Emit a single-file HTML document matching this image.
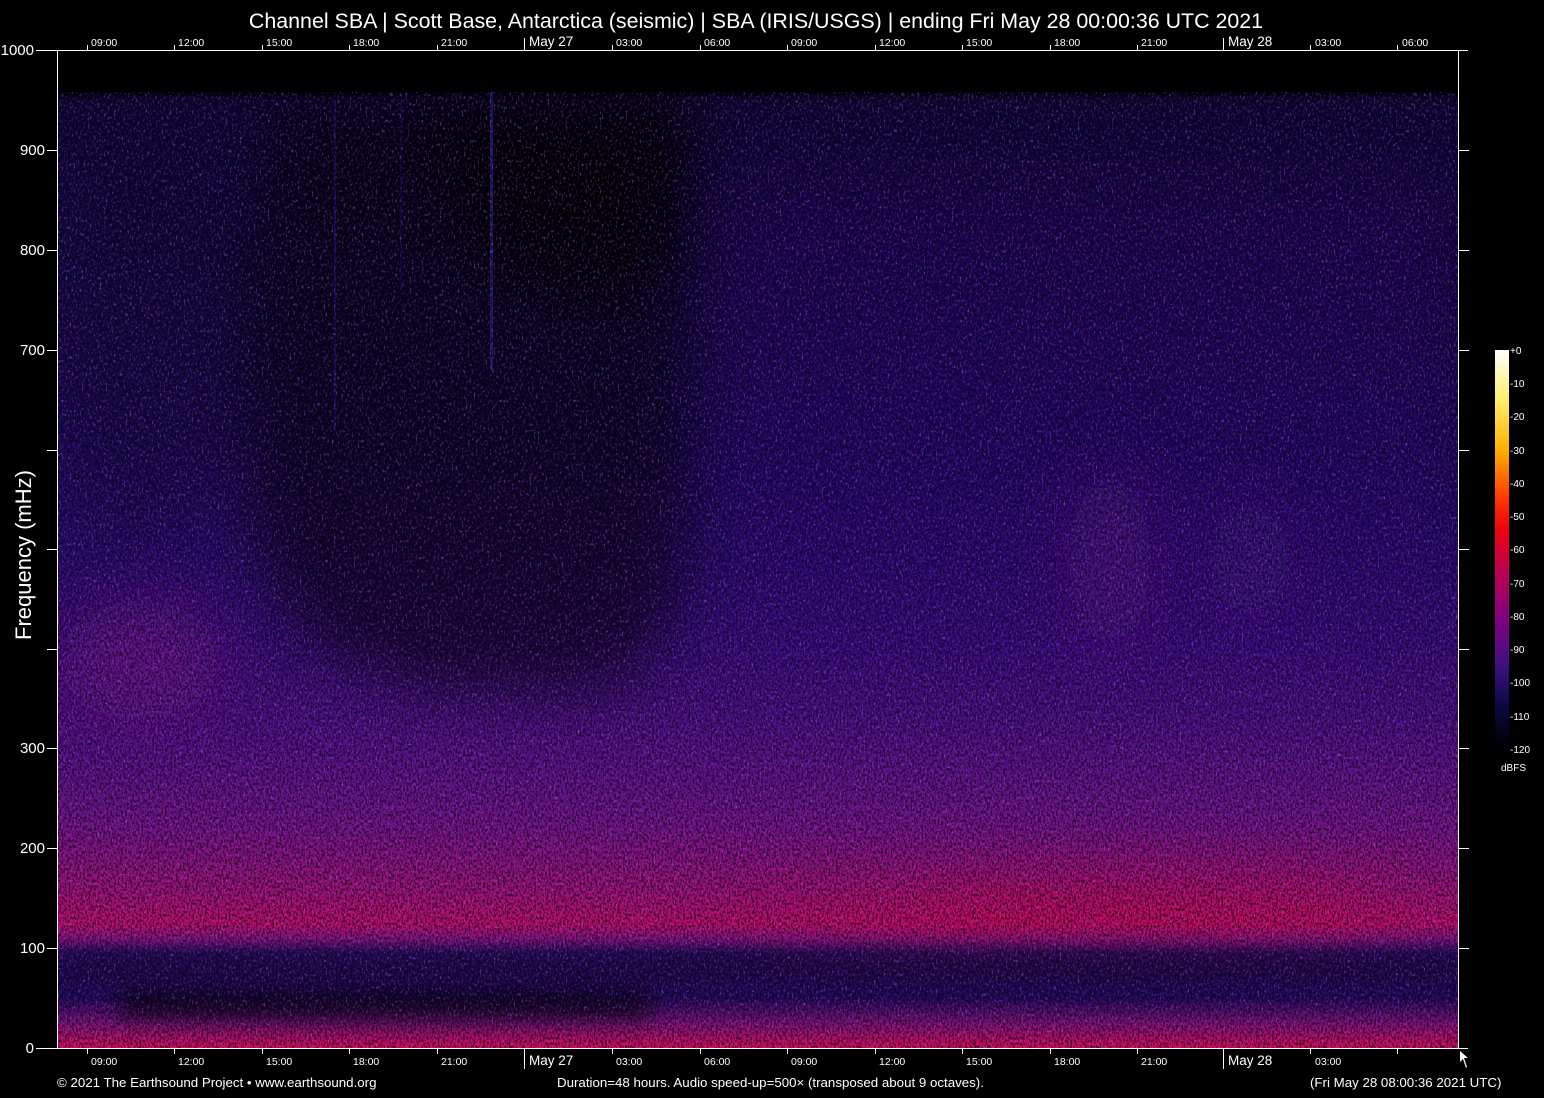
<!DOCTYPE html>
<html><head><meta charset="utf-8"><style>
html,body{margin:0;padding:0;background:#000;width:1544px;height:1098px;overflow:hidden}
svg{display:block}
text{font-family:"Liberation Sans",Arial,sans-serif;fill:#fff}
</style></head><body>
<svg width="1544" height="1098" viewBox="0 0 1544 1098" xmlns="http://www.w3.org/2000/svg">
<defs>
<linearGradient id="base" x1="0" y1="0" x2="0" y2="1">
<stop offset="0" stop-color="#000"/>
<stop offset="0.04" stop-color="#000"/>
<stop offset="0.05" stop-color="#0e0638"/>
<stop offset="0.2" stop-color="#140848"/>
<stop offset="0.4" stop-color="#1c0a5e"/>
<stop offset="0.5" stop-color="#280c70"/>
<stop offset="0.6" stop-color="#3a0e80"/>
<stop offset="0.7" stop-color="#54128a"/>
<stop offset="0.78" stop-color="#74148a"/>
<stop offset="0.84" stop-color="#9c127a"/>
<stop offset="0.875" stop-color="#bc0e6c"/>
<stop offset="0.89" stop-color="#8a1484"/>
<stop offset="0.905" stop-color="#2a0c68"/>
<stop offset="0.95" stop-color="#220a60"/>
<stop offset="0.975" stop-color="#7c127a"/>
<stop offset="1" stop-color="#d80c5c"/>
</linearGradient>
<linearGradient id="cbar" x1="0" y1="0" x2="0" y2="1">
<stop offset="0" stop-color="#ffffff"/>
<stop offset="0.12" stop-color="#fff070"/>
<stop offset="0.25" stop-color="#ffb000"/>
<stop offset="0.38" stop-color="#ff3000"/>
<stop offset="0.45" stop-color="#f00010"/>
<stop offset="0.55" stop-color="#c00050"/>
<stop offset="0.68" stop-color="#800080"/>
<stop offset="0.8" stop-color="#3a1080"/>
<stop offset="0.9" stop-color="#0a0840"/>
<stop offset="1" stop-color="#000"/>
</linearGradient>
<filter id="blur30" x="-50%" y="-50%" width="200%" height="200%"><feGaussianBlur stdDeviation="30"/></filter>
<filter id="blur10" x="-50%" y="-50%" width="200%" height="200%"><feGaussianBlur stdDeviation="10"/></filter>
<filter id="noise" x="0" y="0" width="100%" height="100%">
<feTurbulence type="fractalNoise" baseFrequency="0.55 0.35" numOctaves="2" seed="3"/>
<feColorMatrix type="matrix" values="0 0 0 0 0  0 0 0 0 0  0 0 0 0 0  -4 0 0 0 2.3"/>
</filter>
<filter id="noise2" x="0" y="0" width="100%" height="100%">
<feTurbulence type="fractalNoise" baseFrequency="0.5 0.3" numOctaves="2" seed="9"/>
<feColorMatrix type="matrix" values="0 0 0 0 0.4  0 0 0 0 0.08  0 0 0 0 0.7  4 0 0 0 -2.2"/>
</filter>
<clipPath id="plot"><rect x="58" y="50" width="1401" height="998"/></clipPath>
</defs>

<g clip-path="url(#plot)">
<rect x="58" y="50" width="1401" height="998" fill="url(#base)"/>
<g filter="url(#blur30)" fill="#000">
<polygon points="270,95 690,95 690,300 680,600 620,690 420,690 300,640 250,520 240,300" opacity="0.55"/>
<polygon points="420,95 690,95 680,260 600,300 480,260" opacity="0.8"/>
<ellipse cx="150" cy="350" rx="90" ry="200" opacity="0.15"/>
</g>
<g filter="url(#blur30)">
<ellipse cx="140" cy="660" rx="80" ry="60" fill="#8a1490" opacity="0.5"/>
<ellipse cx="1110" cy="560" rx="40" ry="90" fill="#7a1690" opacity="0.5"/>
<ellipse cx="1250" cy="560" rx="40" ry="60" fill="#6a1490" opacity="0.4"/>
<rect x="720" y="180" width="720" height="500" fill="#30108a" opacity="0.2"/>
<ellipse cx="1150" cy="905" rx="250" ry="20" fill="#e0083a" opacity="0.5"/>
<ellipse cx="900" cy="915" rx="150" ry="15" fill="#e0083a" opacity="0.35"/>
</g>
<g filter="url(#blur10)" fill="#000">
<rect x="120" y="990" width="530" height="30" opacity="0.6"/>
<rect x="60" y="955" width="1400" height="25" opacity="0.25"/>
</g>
<rect x="490" y="80" width="3" height="290" fill="#3a1aa0" opacity="0.7"/>
<rect x="334" y="100" width="2" height="330" fill="#2a1480" opacity="0.6"/>
<rect x="400" y="90" width="2" height="200" fill="#20106a" opacity="0.5"/>
<rect x="58" y="92" width="1401" height="956" fill="#000" filter="url(#noise2)" opacity="0.6"/>
<rect x="58" y="92" width="1401" height="956" fill="#000" filter="url(#noise)" opacity="0.6"/>
<rect x="58" y="50" width="1401" height="42" fill="#000"/>
</g>

<g stroke="#fff" stroke-width="1" shape-rendering="crispEdges">
<line x1="36" y1="50.5" x2="1468" y2="50.5"/>
<line x1="36" y1="1048.5" x2="1468" y2="1048.5"/>
<line x1="57.5" y1="50" x2="57.5" y2="1048"/>
<line x1="1458.5" y1="50" x2="1458.5" y2="1048"/>
<line x1="47" y1="150.5" x2="57" y2="150.5"/><line x1="47" y1="250.5" x2="57" y2="250.5"/><line x1="47" y1="350.5" x2="57" y2="350.5"/><line x1="47" y1="450.5" x2="57" y2="450.5"/><line x1="47" y1="549.5" x2="57" y2="549.5"/><line x1="47" y1="649.5" x2="57" y2="649.5"/><line x1="47" y1="748.5" x2="57" y2="748.5"/><line x1="47" y1="848.5" x2="57" y2="848.5"/><line x1="47" y1="948.5" x2="57" y2="948.5"/>
<line x1="1459" y1="150.5" x2="1469" y2="150.5"/><line x1="1459" y1="250.5" x2="1469" y2="250.5"/><line x1="1459" y1="350.5" x2="1469" y2="350.5"/><line x1="1459" y1="450.5" x2="1469" y2="450.5"/><line x1="1459" y1="549.5" x2="1469" y2="549.5"/><line x1="1459" y1="649.5" x2="1469" y2="649.5"/><line x1="1459" y1="748.5" x2="1469" y2="748.5"/><line x1="1459" y1="848.5" x2="1469" y2="848.5"/><line x1="1459" y1="948.5" x2="1469" y2="948.5"/>
<line x1="87.5" y1="45" x2="87.5" y2="50"/><line x1="174.5" y1="45" x2="174.5" y2="50"/><line x1="262.5" y1="45" x2="262.5" y2="50"/><line x1="349.5" y1="45" x2="349.5" y2="50"/><line x1="437.5" y1="45" x2="437.5" y2="50"/><line x1="524.5" y1="38" x2="524.5" y2="50"/><line x1="612.5" y1="45" x2="612.5" y2="50"/><line x1="700.5" y1="45" x2="700.5" y2="50"/><line x1="787.5" y1="45" x2="787.5" y2="50"/><line x1="875.5" y1="45" x2="875.5" y2="50"/><line x1="962.5" y1="45" x2="962.5" y2="50"/><line x1="1050.5" y1="45" x2="1050.5" y2="50"/><line x1="1137.5" y1="45" x2="1137.5" y2="50"/><line x1="1223.5" y1="38" x2="1223.5" y2="50"/><line x1="1310.5" y1="45" x2="1310.5" y2="50"/><line x1="1397.5" y1="45" x2="1397.5" y2="50"/>
<line x1="87.5" y1="1048" x2="87.5" y2="1054"/><line x1="174.5" y1="1048" x2="174.5" y2="1054"/><line x1="262.5" y1="1048" x2="262.5" y2="1054"/><line x1="349.5" y1="1048" x2="349.5" y2="1054"/><line x1="437.5" y1="1048" x2="437.5" y2="1054"/><line x1="524.5" y1="1048" x2="524.5" y2="1069"/><line x1="612.5" y1="1048" x2="612.5" y2="1054"/><line x1="700.5" y1="1048" x2="700.5" y2="1054"/><line x1="787.5" y1="1048" x2="787.5" y2="1054"/><line x1="875.5" y1="1048" x2="875.5" y2="1054"/><line x1="962.5" y1="1048" x2="962.5" y2="1054"/><line x1="1050.5" y1="1048" x2="1050.5" y2="1054"/><line x1="1137.5" y1="1048" x2="1137.5" y2="1054"/><line x1="1223.5" y1="1048" x2="1223.5" y2="1069"/><line x1="1310.5" y1="1048" x2="1310.5" y2="1054"/><line x1="1397.5" y1="1048" x2="1397.5" y2="1054"/>
</g>
<path d="M1460,1051 L1460,1062 L1463,1059 L1466,1068 L1467,1067 L1464,1058 L1468,1058 Z" fill="#fff"/>

<text x="756" y="28" font-size="21.4" text-anchor="middle">Channel SBA | Scott Base, Antarctica (seismic) | SBA (IRIS/USGS) | ending Fri May 28 00:00:36 UTC 2021</text>

<g font-size="15" text-anchor="end">
<text x="34" y="55">1000</text>
<text x="45" y="155">900</text>
<text x="45" y="255">800</text>
<text x="45" y="355">700</text>
<text x="45" y="753">300</text>
<text x="45" y="853">200</text>
<text x="45" y="953">100</text>
<text x="34" y="1053">0</text>
</g>
<text transform="translate(31,555) rotate(-90)" font-size="22" text-anchor="middle">Frequency (mHz)</text>

<g font-size="10.5">
<text x="91" y="46">09:00</text><text x="178" y="46">12:00</text><text x="266" y="46">15:00</text><text x="353" y="46">18:00</text><text x="441" y="46">21:00</text>
<text x="529" y="46" font-size="13.5">May 27</text>
<text x="616" y="46">03:00</text><text x="704" y="46">06:00</text><text x="791" y="46">09:00</text><text x="879" y="46">12:00</text><text x="966" y="46">15:00</text><text x="1054" y="46">18:00</text><text x="1141" y="46">21:00</text>
<text x="1228" y="46" font-size="13.5">May 28</text>
<text x="1315" y="46">03:00</text><text x="1402" y="46">06:00</text>
</g>
<g font-size="10.5">
<text x="91" y="1065">09:00</text><text x="178" y="1065">12:00</text><text x="266" y="1065">15:00</text><text x="353" y="1065">18:00</text><text x="441" y="1065">21:00</text>
<text x="529" y="1065" font-size="13.5">May 27</text>
<text x="616" y="1065">03:00</text><text x="704" y="1065">06:00</text><text x="791" y="1065">09:00</text><text x="879" y="1065">12:00</text><text x="966" y="1065">15:00</text><text x="1054" y="1065">18:00</text><text x="1141" y="1065">21:00</text>
<text x="1228" y="1065" font-size="13.5">May 28</text>
<text x="1315" y="1065">03:00</text>
</g>

<g font-size="13.3">
<text x="57" y="1087">© 2021 The Earthsound Project • www.earthsound.org</text>
<text x="557" y="1087">Duration=48 hours. Audio speed-up=500× (transposed about 9 octaves).</text>
<text x="1310" y="1087">(Fri May 28 08:00:36 2021 UTC)</text>
</g>

<rect x="1495" y="350" width="14" height="398" fill="url(#cbar)"/>
<g font-size="10" fill="#ddd">
<text x="1510" y="354">+0</text>
<text x="1510" y="387">-10</text>
<text x="1510" y="420">-20</text>
<text x="1510" y="454">-30</text>
<text x="1510" y="487">-40</text>
<text x="1510" y="520">-50</text>
<text x="1510" y="553">-60</text>
<text x="1510" y="587">-70</text>
<text x="1510" y="620">-80</text>
<text x="1510" y="653">-90</text>
<text x="1510" y="686">-100</text>
<text x="1510" y="720">-110</text>
<text x="1510" y="753">-120</text>
<text x="1501" y="771">dBFS</text>
</g>
</svg>
</body></html>
